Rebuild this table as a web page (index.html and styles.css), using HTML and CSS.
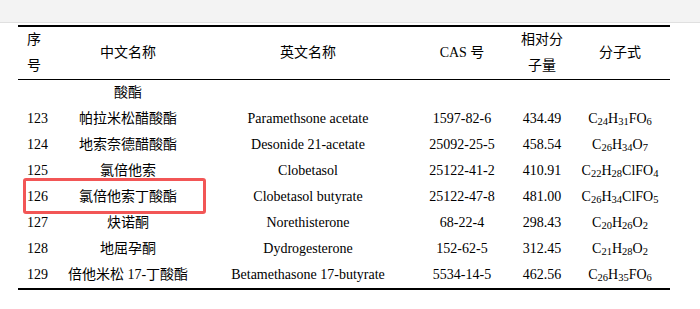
FILE: index.html
```html
<!DOCTYPE html>
<html lang="zh">
<head>
<meta charset="utf-8">
<link rel="stylesheet" href="styles.css">
</head>
<body>
<div class="topbar"></div>
<div class="wrap">
  <table class="tbl">
    <colgroup>
      <col class="c1"><col class="c2"><col class="c3"><col class="c4"><col class="c5"><col class="c6">
    </colgroup>
    <thead>
      <tr>
        <th class="num">序号</th>
        <th>中文名称</th>
        <th>英文名称</th>
        <th>CAS 号</th>
        <th class="mw">相对分子量</th>
        <th>分子式</th>
      </tr>
    </thead>
    <tbody>
      <tr><td class="num"></td><td>酸酯</td><td></td><td></td><td></td><td></td></tr>
      <tr><td class="num">123</td><td>帕拉米松醋酸酯</td><td>Paramethsone acetate</td><td>1597-82-6</td><td>434.49</td><td>C<sub>24</sub>H<sub>31</sub>FO<sub>6</sub></td></tr>
      <tr><td class="num">124</td><td>地索奈德醋酸酯</td><td>Desonide 21-acetate</td><td>25092-25-5</td><td>458.54</td><td>C<sub>26</sub>H<sub>34</sub>O<sub>7</sub></td></tr>
      <tr><td class="num">125</td><td>氯倍他索</td><td>Clobetasol</td><td>25122-41-2</td><td>410.91</td><td>C<sub>22</sub>H<sub>28</sub>ClFO<sub>4</sub></td></tr>
      <tr><td class="num">126</td><td>氯倍他索丁酸酯</td><td>Clobetasol butyrate</td><td>25122-47-8</td><td>481.00</td><td>C<sub>26</sub>H<sub>34</sub>ClFO<sub>5</sub></td></tr>
      <tr><td class="num">127</td><td>炔诺酮</td><td>Norethisterone</td><td>68-22-4</td><td>298.43</td><td>C<sub>20</sub>H<sub>26</sub>O<sub>2</sub></td></tr>
      <tr><td class="num">128</td><td>地屈孕酮</td><td>Dydrogesterone</td><td>152-62-5</td><td>312.45</td><td>C<sub>21</sub>H<sub>28</sub>O<sub>2</sub></td></tr>
      <tr><td class="num">129</td><td>倍他米松 17-丁酸酯</td><td>Betamethasone 17-butyrate</td><td>5534-14-5</td><td>462.56</td><td>C<sub>26</sub>H<sub>35</sub>FO<sub>6</sub></td></tr>
    </tbody>
  </table>
  <div class="highlight"></div>
</div>
</body>
</html>
```
FILE: styles.css
```css
html, body {
  margin: 0;
  padding: 0;
  background: #ffffff;
}
body {
  font-family: "Liberation Serif", "Noto Sans CJK SC", serif;
  font-size: 14px;
  color: #000;
}
.topbar {
  height: 22px;
  background: #f3f3f3;
  border-bottom: 1px solid #e0e0e0;
}
.wrap {
  position: relative;
  margin: 2px 0 0 18px;
  width: 652px;
}
.tbl {
  width: 652px;
  table-layout: fixed;
  border-collapse: collapse;
  border-top: 2px solid #000;
  border-bottom: 2px solid #000;
}
.c1 { width: 32px; }
.c2 { width: 156px; }
.c3 { width: 204px; }
.c4 { width: 104px; }
.c5 { width: 56px; }
.c6 { width: 100px; }
.tbl th, .tbl td {
  padding: 0;
  line-height: 26px;
  height: 26px;
  text-align: center;
  vertical-align: middle;
  font-weight: normal;
  white-space: nowrap;
}
.tbl th {
  height: 52px;
  white-space: normal;
  border-bottom: 1px solid #000;
}
.tbl .num {
  text-align: left;
  padding-left: 9px;
}
.tbl th.num {
  padding-right: 2px;
}
.tbl th.mw {
  padding: 0 5px;
}
sub {
  font-size: 10.5px;
  line-height: 0;
  vertical-align: -2px;
}
.highlight {
  position: absolute;
  left: 5px;
  top: 153px;
  width: 177px;
  height: 30px;
  border: 3px solid #f25656;
  border-radius: 3px;
}
```
